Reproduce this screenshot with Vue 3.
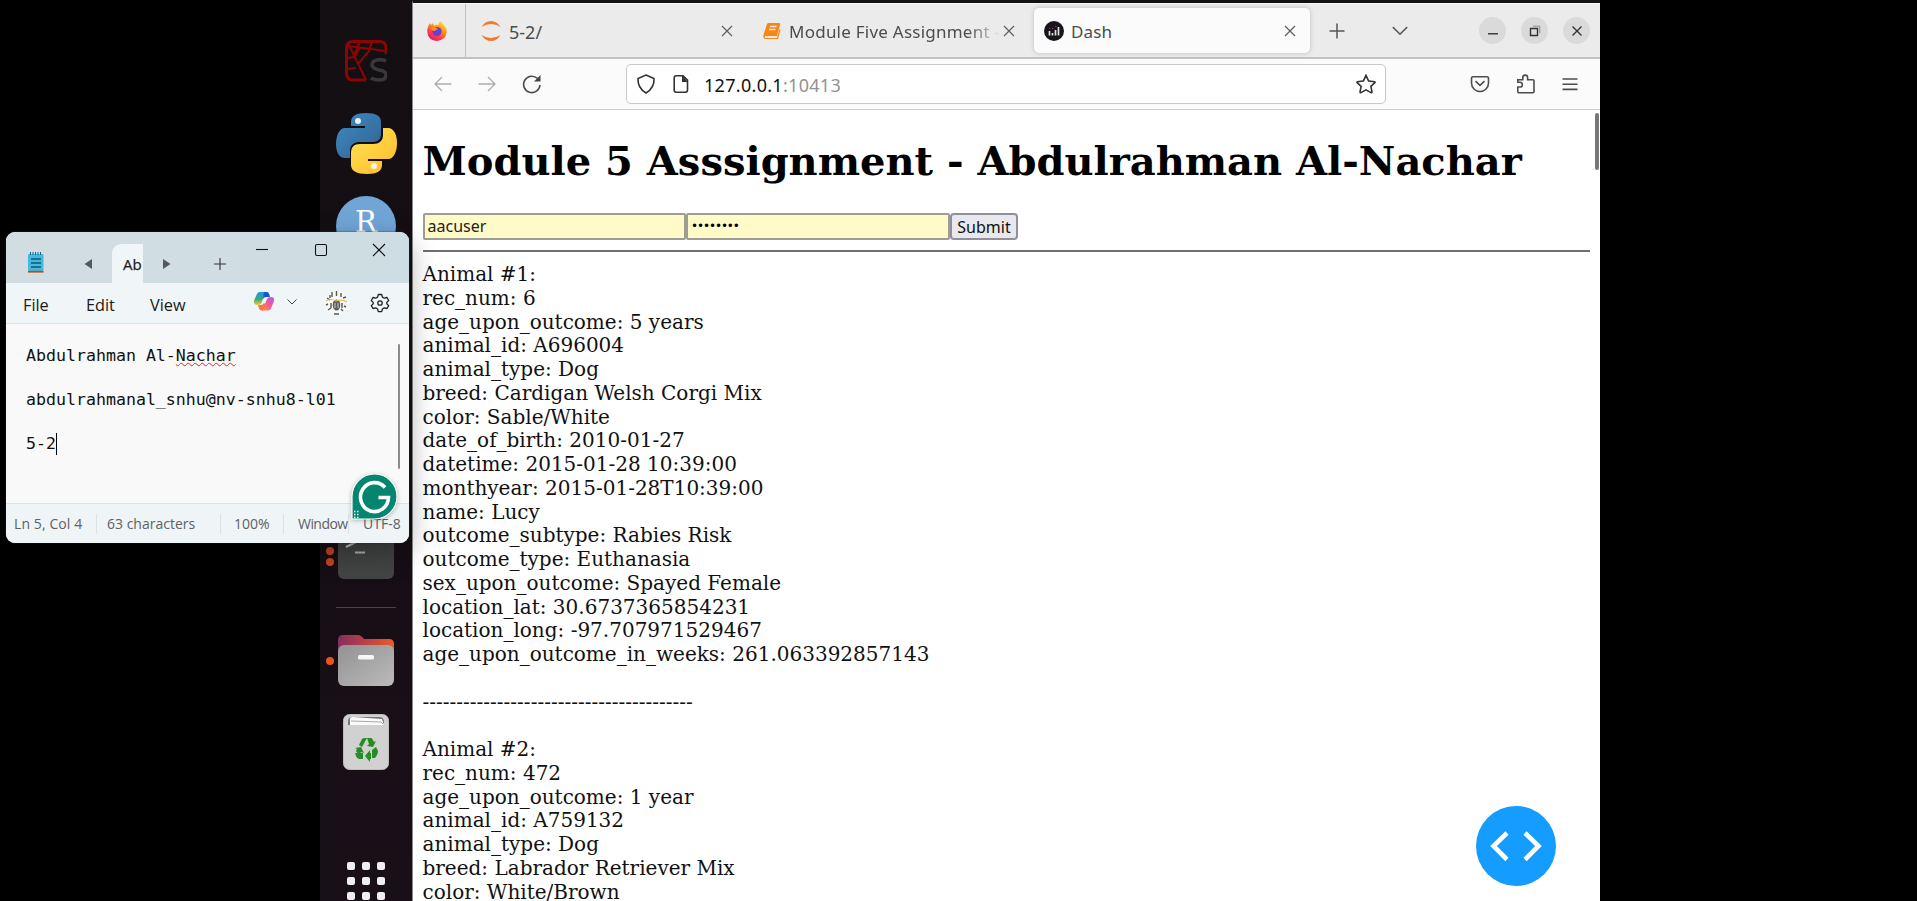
<script setup>
const animals = [
  [
    'Animal #1:', 'rec_num: 6', 'age_upon_outcome: 5 years', 'animal_id: A696004', 'animal_type: Dog',
    'breed: Cardigan Welsh Corgi Mix', 'color: Sable/White', 'date_of_birth: 2010-01-27',
    'datetime: 2015-01-28 10:39:00', 'monthyear: 2015-01-28T10:39:00', 'name: Lucy',
    'outcome_subtype: Rabies Risk', 'outcome_type: Euthanasia', 'sex_upon_outcome: Spayed Female',
    'location_lat: 30.6737365854231', 'location_long: -97.707971529467',
    'age_upon_outcome_in_weeks: 261.063392857143',
  ],
  [
    'Animal #2:', 'rec_num: 472', 'age_upon_outcome: 1 year', 'animal_id: A759132', 'animal_type: Dog',
    'breed: Labrador Retriever Mix', 'color: White/Brown',
  ],
]
const divider = '-'.repeat(40)
</script>

<template>
  <div class="screen">
    <aside class="dock">
      <svg class="spyder" viewBox="0 0 42 42" fill="none" stroke="#8c0505" stroke-width="3">
        <path d="M41 14V8Q41 1.500 34 1.500H8Q1.500 1.500 1.500 8V33Q1.500 40 8 40H21" />
        <path d="M3 3L21 40M3 6L41 11M15 2L8 17M27 2L24 11L13 24M2 29L11 28M2 18L9 17L15 8" stroke-width="2" />
        <path stroke="#38383a" stroke-width="3.600" d="M41 21Q37 19 32 20Q27 21 27 25Q27 28 34 30Q41 31 41 35Q41 40 34 40Q29 40 26 38" />
      </svg>
      <svg class="python" viewBox="0 0 61 61">
        <defs>
          <linearGradient id="pb" x1="0" y1="0" x2="1" y2="1"><stop offset="0" stop-color="#3d8bc6" /><stop offset="1" stop-color="#34618d" /></linearGradient>
          <linearGradient id="py" x1="0" y1="0" x2="1" y2="1"><stop offset="0" stop-color="#ffe556" /><stop offset="1" stop-color="#ffb92b" /></linearGradient>
        </defs>
        <path fill="url(#pb)" d="M30 0C20 0 15 3 15 9V13H29V15H9C3 15 0 23 0 31S3 45 9 45H14V38C14 31 19 29 24 29H37C42 29 45 26 45 21V9C45 3 40 0 30 0Z" />
        <path fill="url(#py)" d="M31 61C41 61 46 58 46 52V48H32V46H52C58 46 61 38 61 30S58 15 52 15H47V22C47 28 43 31 37 31H24C18 31 15 34 15 40V52C15 58 21 61 31 61Z" />
        <circle cx="22" cy="8" r="3" fill="#e5f2fb" /><circle cx="38" cy="53" r="3" fill="#fff5d5" />
      </svg>
      <div class="rstudio">R</div>
      <div class="dock-row terminal-row">
        <div class="pips"><i></i><i></i></div>
        <svg class="terminal" viewBox="0 0 56 56"><rect width="56" height="56" rx="6" fill="#434444" /><path d="M8 16L16 20L8 24" fill="none" stroke="#c4c4c4" stroke-width="2.200" /><path d="M17 29.500H27" stroke="#b4b4b4" stroke-width="2" /></svg>
      </div>
      <div class="rule"></div>
      <div class="dock-row folder-row">
        <div class="pips"><i></i></div>
        <svg class="folder" viewBox="0 0 56 51">
          <defs>
            <linearGradient id="fo"><stop offset="0" stop-color="#832d60" /><stop offset="1" stop-color="#f1572a" /></linearGradient>
            <linearGradient id="fg" x1="0" y1="0" x2="1" y2="1"><stop offset="0" stop-color="#929292" /><stop offset="1" stop-color="#bbb" /></linearGradient>
          </defs>
          <path fill="url(#fo)" d="M0 25V5Q0 0 5 0H20Q23 0 26 4H51Q56 4 56 9V25Z" />
          <rect y="10" width="56" height="41" rx="6" fill="url(#fg)" /><rect x="20" y="20" width="16" height="4.500" rx="1.500" fill="#f6f6f6" />
        </svg>
      </div>
      <svg class="trash" viewBox="0 0 46 56">
        <rect x=".5" y=".5" width="45" height="55" rx="6" fill="#d1d1d1" stroke="#bdbdbd" />
        <path d="M5 11V7Q5 3 10 3H36Q41 3 41 8V11Z" fill="#777" /><path d="M7 11V5Q7 3 10 3L39 5L41 11Z" fill="#fafafa" /><path d="M8 7L38 8L40 10" fill="none" stroke="#aaa" />
        <g fill="#268d22">
          <path d="M16 31L19 25Q20 24 22 24H24L19 33Z" /><path d="M24 24H28Q29 24 30 26L31 28L33 27L30 33L24 32L26 30Z" />
          <path d="M29 36L33 33L35 37Q35 39 34 41L32 44H29Z" /><path d="M28 39V45H27V48L22 42L27 36V39Z" />
          <path d="M20 39V45H16Q14 45 13 42L12 39Z" /><path d="M12 34L18 33L21 39L18 38L16 41L13 37L14 35Z" />
        </g>
      </svg>
      <div class="apps"><i v-for="n in 9" :key="n"></i></div>
    </aside>

    <main class="browser">
      <header class="tabs">
        <div class="pin">
          <svg width="20" height="20" viewBox="0 0 20 20">
            <defs><linearGradient id="ff" x1=".9" y1="0" x2=".3" y2="1"><stop offset="0" stop-color="#fff44f" /><stop offset=".4" stop-color="#ff980e" /><stop offset=".75" stop-color="#ff3b47" /><stop offset="1" stop-color="#e31587" /></linearGradient></defs>
            <path fill="url(#ff)" d="M13 0Q16 2 16.500 4Q20 7 19.700 11Q19 19 10 20Q1 19.500 .3 11Q0 6 3 2L4 4L6 2L7 5Q9 3 11 4Z" />
            <circle cx="10" cy="10.500" r="4.600" fill="#6b3bd6" /><path d="M4 7Q8 5 11 8L7 10Q5 10 4 7Z" fill="#ff9a16" />
          </svg>
        </div>
        <div class="tab first">
          <svg width="20" height="20" viewBox="0 0 20 20" fill="#f37a2d"><path d="M.5 6Q4 0 10 0T19.500 6Q15 3 10 3T.5 6ZM.5 14Q4 20 10 20T19.500 14Q15 17 10 17T.5 14Z" /></svg>
          <span class="title jup">5-2/</span>
          <svg class="close" viewBox="0 0 12 12"><path d="M1 1L11 11M11 1L1 11" /></svg>
        </div>
        <div class="tab second">
          <svg width="18" height="18" viewBox="0 0 18 18"><path fill="#f98512" d="M5 1H16Q17.500 1 17 3L14 14H3Q1 14 2 16H14L16.500 7L17.500 8L15 17H2Q-.5 16 .5 13L4 2Z" /><path d="M7 4.500H13.500M6 7.500H12.500" stroke="#ececec" stroke-width="1.500" /></svg>
          <span class="title module">Module Five Assignment -</span>
          <svg class="close" viewBox="0 0 12 12"><path d="M1 1L11 11M11 1L1 11" /></svg>
        </div>
        <div class="tab active">
          <svg width="20" height="20" viewBox="0 0 20 20"><circle cx="10" cy="10" r="10" fill="#17151a" /><path d="M5.500 14.500V10M8.500 14.500V12M11.500 14.500V9M14.500 14.500V6" stroke="#ddd" stroke-width="1.700" /><path d="M5 7.500H6.500M8 7.500H9.500M11 5.500H12.500" stroke="#83395e" /></svg>
          <span class="title dash">Dash</span>
          <svg class="close" viewBox="0 0 12 12"><path d="M1 1L11 11M11 1L1 11" /></svg>
        </div>
        <svg class="plus" viewBox="0 0 16 16"><path d="M8 .5V15.500M.5 8H15.500" /></svg>
        <svg class="chev" viewBox="0 0 16 16"><path d="M.8 4L8 11.200L15.200 4" /></svg>
        <div class="controls">
          <span><svg viewBox="0 0 12 12"><path d="M1 8.800H11" /></svg></span>
          <span><svg viewBox="0 0 12 12"><path d="M1.500 3.500H8.500V10.500H1.500Z" /><path d="M4 1.200H10.800V8" stroke="#888" stroke-width="1" /></svg></span>
          <span><svg viewBox="0 0 12 12"><path d="M1.500 1.500L10.500 10.500M10.500 1.500L1.500 10.500" /></svg></span>
        </div>
      </header>

      <nav class="toolbar">
        <svg class="back" viewBox="0 0 20 20"><path d="M18.500 10H2M9 3L2 10L9 17" /></svg>
        <svg class="fwd" viewBox="0 0 20 20"><path d="M1.500 10H18M11 3L18 10L11 17" /></svg>
        <svg class="reload" viewBox="0 0 20 20"><path d="M18 11A8.200 8.200 0 1 1 15.500 4.500" /><path d="M18.500 1V7.500H12Z" fill="#444" stroke="none" /></svg>
        <div class="url">
          <svg class="shield" viewBox="0 0 20 20"><path d="M10 1L18 4.500Q18.500 14 10 19Q1.500 14 2 4.500Z" /></svg>
          <svg class="page-icon" viewBox="0 0 16 20"><path d="M3 1.800H10L14.500 6V16Q14.500 18.200 12.500 18.200H3Q1.200 18.200 1.200 16V4Q1.200 1.800 3 1.800Z" /><path d="M9 1V8H15Z" fill="#333" stroke="none" /></svg>
          <span class="address">127.0.0.1<b>:10413</b></span>
          <svg class="star" viewBox="0 0 20 20"><path d="M10 1.300L12.400 6.600Q12.600 7 13 7L18.500 7.700Q19.400 8 18.800 8.700L14.900 12.300L16 18Q16 19 15 18.600L10 15.900L5 18.600Q4 19 4 18L5.100 12.300L1.200 8.700Q.6 8 1.500 7.700L7 7Q7.400 7 7.600 6.600Z" /></svg>
        </div>
        <svg class="pocket" viewBox="0 0 20 20"><path d="M3 2.700H17Q18.500 2.700 18.500 4.500V9A8.500 8.500 0 0 1 1.500 9V4.500Q1.500 2.700 3 2.700ZM5.500 7.200L10 11.300L14.500 7.200" /></svg>
        <svg class="puzzle" viewBox="0 0 20 20"><path d="M2.500 18.700Q1.800 18.700 1.800 17.500V13H4A2.300 2.300 0 0 0 4 8.300H1.800V5.700H6.800V3.500A2.400 2.400 0 0 1 11.600 3.500V5.700H17Q18 5.700 18 7V17.500Q18 18.700 17 18.700Z" /></svg>
        <svg class="menu" viewBox="0 0 16 14"><path d="M.5 2H15.500M.5 7.200H15.500M.5 12.400H15.500" /></svg>
      </nav>

      <section class="page">
        <h1>Module 5 Asssignment - Abdulrahman Al-Nachar</h1>
        <div class="form">
          <div class="field">aacuser</div>
          <div class="field dots">••••••••</div>
          <button>Submit</button>
        </div>
        <div class="hr"></div>
        <div class="records">
          <div v-for="line in animals[0]" :key="line">{{ line }}</div>
          <div class="dashes">{{ divider }}</div>
          <div v-for="line in animals[1]" :key="line">{{ line }}</div>
        </div>
        <div class="scroll"></div>
        <div class="debug"><svg viewBox="0 0 80 80"><path d="M31 27L17.500 40L31 53.500M49 27L62.500 40L49 53.500" /></svg></div>
      </section>
    </main>

    <section class="notepad">
      <header class="np-title">
        <svg class="np-icon" viewBox="0 0 16 21"><rect y="2" width="15.500" height="17" rx="1" fill="#43b9dc" /><path d="M2.500 0V3M5 0V3M7.500 0V3M10 0V3M12.500 0V3" stroke="#14678a" /><path d="M3 7H13M3 11H13M3 15H13" stroke="#0b5a7c" stroke-width="1.500" /><path d="M0 19.700H15.500" stroke="#ad5314" stroke-width="1.800" /></svg>
        <svg class="tri left" viewBox="0 0 8 12"><path d="M8 1V11L.5 6Z" /></svg>
        <div class="np-tab">Ab</div>
        <svg class="tri right" viewBox="0 0 8 12"><path d="M0 1V11L7.500 6Z" /></svg>
        <svg class="np-plus" viewBox="0 0 14 14"><path d="M7 1V13M1 7H13" /></svg>
        <div class="np-controls">
          <svg viewBox="0 0 14 14"><path d="M1 6.500H13" /></svg>
          <svg viewBox="0 0 14 14"><rect x="1.500" y="1.500" width="11" height="11" rx="1.500" /></svg>
          <svg viewBox="0 0 14 14"><path d="M1 1L13 13M13 1L1 13" /></svg>
        </div>
      </header>
      <div class="np-menu">
        <span class="m1">File</span><span class="m2">Edit</span><span class="m3">View</span>
        <svg class="copilot" viewBox="0 0 20 19">
          <defs>
            <linearGradient id="c1" x1="0" y1="0" x2="0" y2="1"><stop offset="0" stop-color="#1799e8" /><stop offset=".55" stop-color="#35aa80" /><stop offset="1" stop-color="#f4cb25" /></linearGradient>
            <linearGradient id="c2" x1="1" y1="0" x2="0" y2="1"><stop offset="0" stop-color="#a95bed" /><stop offset=".5" stop-color="#f35c91" /><stop offset="1" stop-color="#ff9a4c" /></linearGradient>
          </defs>
          <path fill="url(#c1)" d="M6 0H13L10 4L7 12Q6 13 3 13Q-1 13 .3 8L2.500 3Q3.500 0 6 0Z" /><path fill="#1756cf" d="M10 0H13Q15 0 16 5H12Q10 5 9 7Z" />
          <path fill="url(#c2)" d="M14 18.500H7L10 14L13 7Q14 5 17 5Q21 5 19.700 10L17.500 15Q16.500 18.500 14 18.500Z" /><path fill="#ff7547" d="M9 18.500H7Q5 18 4 13H7Q9 13 10 11L12 13Z" />
        </svg>
        <svg class="np-chev" viewBox="0 0 12 12"><path d="M1.500 3.500L6 8L10.500 3.500" /></svg>
        <svg class="avatar" viewBox="0 0 25 25"><circle cx="12.500" cy="12.500" r="12.500" fill="#f8f8f5" /><path d="M3 7L6 9M2 14L4 13M4 19L7 17M19 7L22 6M20 15L22 16M8 1V6M12.500 0V5M17 2V6M10 23H15M6 4V7M19 20L17 18M7 12V17M18 12V17" stroke="#55565a" stroke-width="1.400" /><ellipse cx="12.500" cy="14" rx="3.800" ry="5.500" fill="#5b5e60" /><path d="M2 10Q7 7 12 10Q18 8 23 11" fill="none" stroke="#e2c063" stroke-width="1.200" /><path d="M11 12V17M14 12V17" stroke="#ccc" /></svg>
        <svg class="gear" viewBox="0 0 20 20"><path d="M8.300 1.500H11.700L12.400 4.100L14.300 5.200L17 4.500L18.700 7.500L16.800 9.400V10.800L18.700 12.600L17 15.500L14.300 14.900L12.400 16L11.700 18.600H8.300L7.600 16L5.700 14.900L3 15.500L1.300 12.600L3.200 10.800V9.400L1.300 7.500L3 4.500L5.700 5.200L7.600 4.100Z" /><circle cx="10" cy="10" r="2.200" /></svg>
      </div>
      <div class="editor">
        <p>Abdulrahman Al-<u>Nachar</u></p>
        <p>abdulrahmanal_snhu@nv-snhu8-l01</p>
        <p>5-2<i class="caret"></i></p>
        <div class="np-scroll"></div>
      </div>
      <footer class="status">
        <span class="s1">Ln 5, Col 4</span><span class="s2">63 characters</span><span class="s3">100%</span><span class="s4">Window</span><span class="s5">UTF-8</span>
      </footer>
      <svg class="grammarly" viewBox="0 0 47 47"><path d="M1 46V23.500A22.500 22.500 0 1 1 23.500 46Z" fill="#04856f" stroke="#fff" stroke-width="1.200" /><path d="M34 14.500A14 14.500 0 1 0 37.500 24.500H27.500" fill="none" stroke="#fff" stroke-width="3.600" /><path d="M3 38.500H8M3 41.500H8M3 44.500H8" stroke="#fff" stroke-width="1.500" stroke-dasharray="1.500 1.500" /></svg>
    </section>
  </div>
</template>

<style>
html, body { background: #000; overflow: hidden; }
</style>

<style scoped>
* { box-sizing: border-box; }
.screen { position: relative; width: 1917px; height: 901px; overflow: hidden; background: #000; display: flex; padding-left: 320px; }
svg { display: block; flex: none; }
.dock { width: 92px; height: 901px; background: linear-gradient(#130f12, #160e14 50%, #190f18); display: flex; flex-direction: column; align-items: center; overflow: hidden; }
.dock > * { flex: none; }
.spyder { width: 42px; height: 42px; margin-top: 40px; }
.python { width: 61px; height: 61px; margin-top: 31px; margin-left: 1px; }
.rstudio { width: 60px; height: 60px; margin-top: 22px; border-radius: 50%; background: #70a5d6; color: #fff; font: 29px/52px "DejaVu Serif", serif; text-align: center; }
.dock-row { width: 92px; display: flex; align-items: center; gap: 4px; padding-left: 6px; }
.pips { width: 8px; display: flex; flex-direction: column; gap: 3px; }
.pips i { width: 8px; height: 8px; border-radius: 50%; background: #e95420; }
.terminal-row { margin-top: 267px; }
.terminal-row .pips i { background: #cb451b; }
.terminal-row .pips { padding-top: 10px; }
.terminal { width: 56px; height: 56px; }
.rule { width: 60px; height: 1px; background: #4b454a; margin-top: 28px; }
.folder-row { margin-top: 27px; }
.folder { width: 56px; height: 51px; }
.trash { width: 46px; height: 56px; margin-top: 28px; }
.apps { display: grid; grid-template-columns: repeat(3, 8px); gap: 7px; margin-top: 92px; }
.apps i { width: 8px; height: 8px; border-radius: 2px; background: #efefef; }

.browser { width: 1188px; height: 901px; border-top: 3px solid #131313; border-left: 1px solid #8a8a8a; background: #fff; font-family: "Noto Sans", sans-serif; }
.tabs { height: 56px; background: #ebebeb; border-bottom: 2px solid #c2c2c2; border-top: 1px solid #f7f7f7; display: flex; align-items: center; color: #4c4c4c; }
.pin { width: 53px; height: 100%; border-right: 1px solid #c1c1c1; display: flex; align-items: center; padding-left: 14px; }
.tab { display: flex; align-items: center; height: 45px; }
.title { font-size: 17px; line-height: 24px; white-space: nowrap; position: relative; top: 1px; overflow: hidden; }
.tab .title { flex: 1; }
.title.jup { font-size: 18px; }
.close { width: 12px; height: 12px; stroke: #5d5d5d; stroke-width: 1.200; }
.first { width: 267px; padding-left: 15px; gap: 8px; }
.second { width: 282px; padding-left: 30px; gap: 8px; }
.first .title { margin-right: 8px; }
.module { letter-spacing: .24px; margin-right: -6px; mask-image: linear-gradient(90deg, #000 84%, transparent); }
.title.dash { letter-spacing: .1px; margin-left: -1px; }
.active { width: 276px; margin-left: 19px; padding: 0 14px 0 10px; gap: 8px; background: #fbfbfb; border-radius: 5px; box-shadow: 0 0 4px #9999; }
.plus { width: 16px; height: 16px; margin-left: 19px; fill: none; stroke: #555; stroke-width: 1.500; }
.chev { width: 16px; height: 16px; margin-left: 47px; fill: none; stroke: #555; stroke-width: 1.600; }
.controls { display: flex; gap: 15px; margin-left: auto; margin-right: 10px; }
.controls span { width: 27px; height: 27px; border-radius: 50%; background: #dadada; display: grid; place-items: center; }
.controls svg { width: 12px; height: 12px; fill: none; stroke: #333; stroke-width: 1.400; }
.toolbar { height: 51px; background: #fbfbfb; border-bottom: 1px solid #ccc; display: flex; align-items: center; padding-left: 20px; }
.toolbar svg { fill: none; stroke: #4d4d4d; stroke-width: 1.600; }
.back, .fwd, .reload, .shield, .star, .pocket, .puzzle { width: 20px; height: 20px; }
.toolbar .back, .toolbar .fwd { stroke: #afafaf; stroke-width: 1.400; }
.fwd { margin-left: 24px; }
.reload { margin-left: 25px; }
.url { width: 760px; height: 40px; margin-left: 84px; background: #fff; border: 1px solid #c9c9c9; border-radius: 5px; display: flex; align-items: center; }
.url svg { stroke: #333; }
.shield { margin-left: 9px; }
.page-icon { width: 16px; height: 20px; margin-left: 17px; }
.address { margin-left: 15px; font-size: 18px; line-height: 24px; color: #111; letter-spacing: .3px; position: relative; top: 1px; }
.address b { font-weight: 400; color: #929292; }
.star { margin-left: auto; margin-right: 9px; }
.pocket { margin-left: 84px; }
.puzzle { margin-left: 26px; }
.menu { width: 16px; height: 14px; margin-left: 26px; }
.page { position: relative; height: 791px; padding: 27px 10px 0 9.500px; overflow: hidden; color: #000; }
h1 { margin: 0; font: bold 40px/48px "DejaVu Serif", serif; white-space: nowrap; }
.form { display: flex; margin-top: 28px; height: 27px; }
.field { width: 263.500px; height: 27px; border: 2px solid #9e9d93; border-radius: 2px; background: #fffac8; font-size: 16px; line-height: 23px; padding-left: 3px; color: #222; }
.dots { font: 12px/22px "DejaVu Sans", sans-serif; letter-spacing: -1.100px; color: #000; }
button { width: 68px; height: 27px; margin-left: .5px; padding: 0; border: 2px solid #8f8f9d; border-radius: 4px; background: #e9e9ed; color: #111; font: 16px/22px "Noto Sans", sans-serif; }
.hr { height: 2px; background: #6f6f6f; margin-top: 10px; }
.records { margin-top: 11px; font: 20px/23.750px "DejaVu Serif", serif; color: #111; white-space: nowrap; }
.dashes { margin: 23.750px 0; }
.scroll { position: absolute; right: 1px; top: 3px; width: 4px; height: 57px; border-radius: 2px; background: #777; }
.debug { position: absolute; left: 1063px; top: 696px; width: 80px; height: 80px; border-radius: 50%; background: #149cff; }
.debug svg { fill: none; stroke: #fff; stroke-width: 4.600; }

.notepad { position: absolute; left: 6px; top: 232px; width: 403px; height: 311px; border-radius: 9px; background: #f9f9f9; box-shadow: 0 10px 28px #0005, 0 0 2px #333; font-family: "Open Sans", sans-serif; color: #1a1a1a; }
.np-title { height: 51px; border-radius: 9px 9px 0 0; background: linear-gradient(90deg, #d2dde1, #cedde3); display: flex; }
.np-icon { width: 16px; height: 21px; margin: 20px 0 0 22px; }
.tri { width: 8px; height: 12px; fill: #55595b; margin-top: 26px; }
.left { margin-left: 40px; }
.right { margin-left: 20px; }
.np-tab { width: 31px; height: 39px; margin: 12px 0 0 20px; border-radius: 9px 0 0; background: #f0f5f7; font-size: 15px; line-height: 40px; padding-left: 11px; white-space: nowrap; -webkit-text-stroke: .25px; }
.np-plus { width: 14px; height: 14px; margin: 25px 0 0 42px; stroke: #333; stroke-width: 1.100; }
.np-controls { display: flex; gap: 44.500px; margin: 11px 0 0 28px; }
.np-controls svg { width: 14px; height: 14px; fill: none; stroke: #111; stroke-width: 1.100; }
.np-menu { height: 41px; background: #f0f5f7; border-bottom: 1px solid #dfe5e7; display: flex; align-items: center; font-size: 16.300px; padding-left: 17px; }
.np-menu span { white-space: nowrap; position: relative; top: 2px; }
.m1 { width: 63px; }
.m2 { width: 64px; }
.m3 { width: 104px; }
.copilot { width: 20px; height: 19px; margin-top: -4px; }
.np-chev { width: 12px; height: 12px; margin: -3px 0 0 12px; fill: none; stroke: #444; }
.avatar { width: 25px; height: 25px; margin-left: 26px; }
.gear { width: 20px; height: 20px; margin-left: 21px; fill: none; stroke: #222; stroke-width: 1.300; stroke-linejoin: round; }
.editor { position: relative; height: 179px; padding: 21px 0 0 20px; font: 16.600px/22px "DejaVu Sans Mono", monospace; color: #111; }
.editor p { margin: 0 0 22px; height: 22px; white-space: nowrap; display: flex; }
.editor u { text-decoration: underline wavy #e22 1px; text-underline-offset: 1px; text-decoration-skip-ink: none; }
.caret { width: 1px; height: 22px; background: #000; }
.np-scroll { position: absolute; right: 9px; top: 20px; width: 2px; height: 125px; background: #8c8c8c; border-radius: 1px; }
.status { height: 40px; border-top: 1px solid #dde3e5; border-radius: 0 0 9px 9px; background: #eff5f6; display: flex; align-items: center; color: #5d6163; font-size: 14px; }
.status span { height: 20px; line-height: 19px; white-space: nowrap; border-left: 1px solid #dce2e4; }
.status .s1 { width: 90px; padding-left: 8px; border: 0; letter-spacing: .1px; }
.s2 { width: 124px; padding-left: 10px; }
.s3 { width: 63px; padding-left: 13px; }
.status .s4 { width: 65px; padding-left: 14px; letter-spacing: -.55px; }
.s5 { width: 59px; padding-left: 14px; }
.grammarly { position: absolute; left: 345px; top: 241px; width: 47px; height: 47px; filter: drop-shadow(0 1px 2px #0004); }
</style>
